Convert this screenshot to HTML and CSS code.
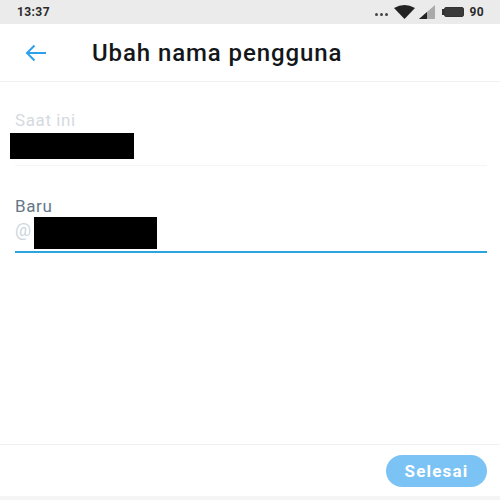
FILE: index.html
```html
<!DOCTYPE html>
<html lang="id">
<head>
    <meta charset="UTF-8">
    <title>Ubah nama pengguna</title>
    <link rel="stylesheet" href="styles.css">
</head>
<body>
    <div class="screen">
        <div class="status-bar">
            <span class="time">13:37</span>
            <div class="status-icons">
                <span class="dots"><i></i><i></i><i></i></span>
                <svg class="wifi" width="21" height="14" viewBox="0 0 21 14"><path d="M0 3 Q10.500 -3 21 3 L10.500 14 Z" fill="#222"/></svg>
                <svg class="signal" width="16" height="14" viewBox="0 0 16 14"><path d="M0 14 L16 0 V14 Z" fill="#aaa"/><path d="M0 14 L8 7 V14 Z" fill="#222"/></svg>
                <span class="battery-nub"></span>
                <span class="battery"><span class="battery-fill"></span></span>
                <span class="battery-level">90</span>
            </div>
        </div>

        <div class="header">
            <svg class="back" width="22" height="18" viewBox="0 0 22 18"><path d="M21 9 H2 M9.500 1.500 L2 9 L9.500 16.500" fill="none" stroke="#2da1ed" stroke-width="2"/></svg>
            <h1>Ubah nama pengguna</h1>
        </div>

        <div class="form">
            <div class="field current">
                <label>Saat ini</label>
                <div class="redacted"></div>
            </div>
            <div class="field new">
                <label>Baru</label>
                <div class="input-row">
                    <span class="at">@</span>
                    <div class="redacted"></div>
                </div>
            </div>
        </div>

        <div class="footer">
            <button class="done-btn">Selesai</button>
        </div>
    </div>
</body>
</html>
```

FILE: styles.css
```css
* {
    margin: 0;
    padding: 0;
    box-sizing: border-box;
}

body {
    font-family: Roboto, "Liberation Sans", sans-serif;
    background: #fff;
}

.screen {
    width: 500px;
    height: 500px;
    display: flex;
    flex-direction: column;
    overflow: hidden;
}

.status-bar {
    height: 24px;
    flex: none;
    background: #ebebeb;
    display: flex;
    align-items: center;
    justify-content: space-between;
    padding: 0 16px 0 17px;
    color: #2a2a2a;
    font-size: 12px;
    font-weight: 700;
    letter-spacing: 0.4px;
}

.status-icons {
    display: flex;
    align-items: center;
}

.dots {
    display: flex;
    gap: 2px;
    margin-top: 5px;
    margin-right: 6px;
}

.dots i {
    width: 3px;
    height: 3px;
    border-radius: 50%;
    background: #444;
}

.wifi {
    margin-right: 4px;
}

.signal {
    margin-right: 7px;
}

.battery-nub {
    width: 2px;
    height: 6px;
    background: #333;
}

.battery {
    width: 20px;
    height: 10px;
    border: 1px solid #333;
    border-radius: 2px;
    margin-right: 5px;
}

.battery-fill {
    display: block;
    height: 100%;
    background: #3a3a3a;
}

.header {
    height: 58px;
    flex: none;
    display: flex;
    align-items: center;
    padding-left: 25px;
    border-bottom: 1px solid #eef1f3;
}

.header h1 {
    font-size: 24px;
    font-weight: 500;
    color: #14171a;
    margin-left: 45px;
    letter-spacing: 0.9px;
}

.form {
    flex: 1;
}

.field {
    margin-left: 15px;
    margin-right: 13px;
}

.field label {
    display: block;
    font-size: 17px;
    letter-spacing: 0.6px;
}

.current {
    height: 84px;
    padding-top: 28px;
    border-bottom: 1px solid #f3f5f6;
}

.current label {
    color: #d5dae0;
}

.current .redacted {
    width: 124px;
    height: 26px;
    margin: 3px 0 0 -5px;
}

.new {
    padding-top: 30px;
    height: 87px;
    border-bottom: 2px solid #2aa5de;
}

.new label {
    color: #657786;
}

.redacted {
    background: #000;
}

.input-row {
    display: flex;
    align-items: flex-start;
}

.at {
    color: #ccd6dd;
    font-size: 18px;
    width: 19px;
    margin-top: 3px;
}

.input-row .redacted {
    width: 123px;
    height: 32px;
    margin-top: 1px;
}

.footer {
    height: 56px;
    flex: none;
    border-top: 1px solid #eef1f3;
    border-bottom: 4px solid #f5f5f5;
    display: flex;
    justify-content: flex-end;
    align-items: flex-start;
    padding: 10px 13px 0 0;
}

.done-btn {
    width: 101px;
    height: 32px;
    border: none;
    border-radius: 16px;
    background: #7cc3f5;
    color: #fff;
    font-family: inherit;
    font-size: 17px;
    font-weight: 700;
    letter-spacing: 1.2px;
}
```
